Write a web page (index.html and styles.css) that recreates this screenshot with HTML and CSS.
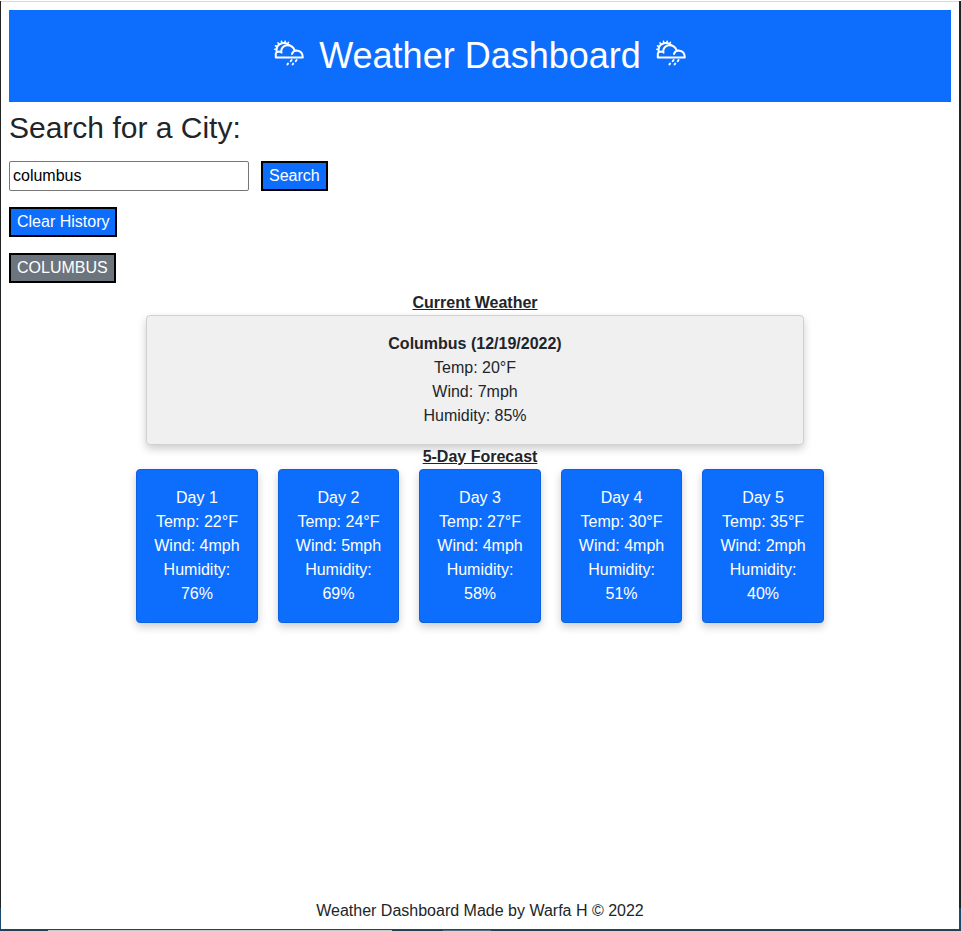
FILE: index.html
```html
<!DOCTYPE html>
<html lang="en">
<head>
  <meta charset="utf-8">
  <meta name="viewport" content="width=device-width, initial-scale=1">
  <title>Weather Dashboard</title>
  <link rel="stylesheet" href="styles.css">
</head>
<body>
  <svg class="sprite" aria-hidden="true">
    <symbol id="rain-cloud" viewBox="0 0 30 26">
      <g fill="none" stroke="currentColor" stroke-width="2" stroke-linecap="round" stroke-linejoin="round">
        <path d="M1.8 17.4 V13.4 Q2.6 11.4 5 11.4 Q6.6 11.6 7.6 12.6 M7.2 12 Q7 6.4 12.6 5.2 Q18.8 4.8 20.6 10.4 M18 14 Q18.8 10.6 22.6 10.4 Q28.8 10.8 28.8 17.4 H1.8"/>
        <path d="M2.6 12 Q1.8 4.6 8 3.2 Q11.6 2.4 15 5"/>
        <path d="M2 9.6 L0.9 9.3 M2.8 6.6 L1.5 5.8 M4.8 4.2 L4 2.9 M7.8 2.8 L7.5 1.3 M10.8 2.8 L11.2 1.2 M13.6 3.6 L14.4 2.4" stroke-width="1.6"/>
        <path d="M17.6 20 l-.9 1.2 M22.6 20 l-.9 1.2 M14 23.6 l-.6 .9 M19.2 23.6 l-.6 .9" stroke-width="1.9"/>
      </g>
    </symbol>
  </svg>
  <div class="page">
    <header class="banner">
      <svg class="icon" aria-hidden="true"><use href="#rain-cloud"/></svg>
      <h1>Weather Dashboard</h1>
      <svg class="icon" aria-hidden="true"><use href="#rain-cloud"/></svg>
    </header>

    <section class="search">
      <h2><label for="city">Search for a City:</label></h2>
      <form class="row">
        <input id="city" type="text" value="columbus">
        <button class="btn" type="button">Search</button>
      </form>
      <div class="row"><button class="btn" type="button">Clear History</button></div>
      <div class="row"><button class="btn history" type="button">COLUMBUS</button></div>
    </section>

    <main class="weather">
      <section class="current">
        <h3>Current Weather</h3>
        <div class="card">
          <h4>Columbus (12/19/2022)</h4>
          <p>Temp: 20°F</p>
          <p>Wind: 7mph</p>
          <p>Humidity: 85%</p>
        </div>
      </section>
      <section>
        <h3>5-Day Forecast</h3>
        <div class="forecast">
          <div class="card day"><p>Day 1</p><p>Temp: 22°F</p><p>Wind: 4mph</p><p>Humidity: 76%</p></div>
          <div class="card day"><p>Day 2</p><p>Temp: 24°F</p><p>Wind: 5mph</p><p>Humidity: 69%</p></div>
          <div class="card day"><p>Day 3</p><p>Temp: 27°F</p><p>Wind: 4mph</p><p>Humidity: 58%</p></div>
          <div class="card day"><p>Day 4</p><p>Temp: 30°F</p><p>Wind: 4mph</p><p>Humidity: 51%</p></div>
          <div class="card day"><p>Day 5</p><p>Temp: 35°F</p><p>Wind: 2mph</p><p>Humidity: 40%</p></div>
        </div>
      </section>
    </main>

    <footer>Weather Dashboard Made by Warfa H © 2022</footer>
  </div>
</body>
</html>
```
FILE: styles.css
```css
* {
  box-sizing: border-box;
}

body {
  display: flex;
  min-height: 100vh;
  margin: 0;
  padding: 1px 2px 2px 1px;
  background:
    linear-gradient(90deg, #233f54 48px, #c4c8c9 48px 392px, #233f54 392px 443px, #52707f 443px 491px, #233f54 491px) bottom / 100% 1px no-repeat,
    linear-gradient(#1f4560, #1f4560) bottom / 100% 2px no-repeat,
    linear-gradient(#ffffff, #ffffff) top / 100% 1px no-repeat,
    linear-gradient(0deg, #1a4a6e 23px, #222325 23px);
  color: #212529;
  font: 16px/24px "Liberation Sans", Arial, sans-serif;
}

h1, h2, h3, h4, p {
  margin: 0;
  font-size: 16px;
}

.sprite {
  position: absolute;
  width: 0;
  height: 0;
}

.page {
  display: flex;
  flex: 1;
  flex-direction: column;
  padding: 8px 8px 6px;
  border-top: 1px solid #d9dadb;
  background: #ffffff;
}

.banner {
  display: flex;
  justify-content: center;
  gap: 15px;
  padding: 24px;
  background: #0d6efd;
  color: #ffffff;
}

.banner h1 {
  font-size: 36px;
  font-weight: 400;
  line-height: 44px;
}

.icon {
  width: 30px;
  height: 26px;
  margin-top: 6px;
}

.search {
  display: flex;
  flex-direction: column;
  gap: 16px;
  padding: 8px 0;
}

.search h2 {
  font-size: 30px;
  font-weight: 400;
  line-height: 35px;
}

.row {
  display: flex;
  gap: 12px;
}

.row input {
  width: 240px;
  height: 30px;
  padding: 1px 3px;
  border: 1px solid #767676;
  border-radius: 2px;
  background: #ffffff;
  color: #000000;
  font: inherit;
}

.btn {
  height: 30px;
  padding: 0 6px;
  border: 2px solid #000000;
  background: #0d6efd;
  color: #ffffff;
  font: inherit;
}

.history {
  background: #6c757d;
}

.weather {
  width: 73%;
  margin: 0 auto;
  text-align: center;
}

.weather h3 {
  text-decoration: underline;
}

.current {
  margin: 0 20px 0 10px;
}

.card {
  padding: 16px;
  border: 1px solid #d0d0d0;
  border-radius: 4px;
  background: #f0f0f0;
  box-shadow: 0 4px 8px rgba(0, 0, 0, 0.2);
}

.forecast {
  display: grid;
  grid-template-columns: repeat(5, 1fr);
  gap: 20px;
}

.day {
  border-color: #0b62e0;
  background: #0d6efd;
  color: #ffffff;
}

footer {
  margin-top: auto;
  text-align: center;
}
```
